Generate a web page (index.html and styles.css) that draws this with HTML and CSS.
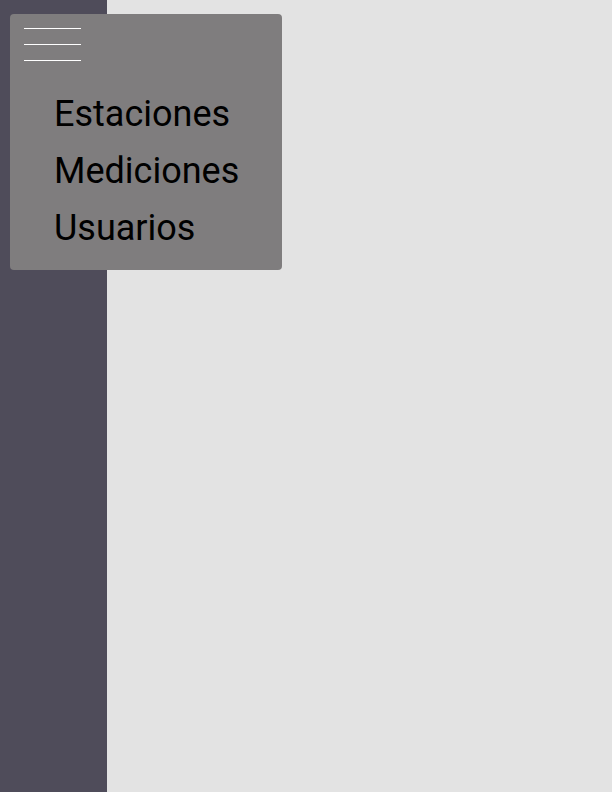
FILE: index.html
```html
<!DOCTYPE html>
<html>
<head>
<meta charset="utf-8">
<link rel="stylesheet" href="styles.css">
</head>
<body>
<div class="layout">
  <aside class="sidebar"></aside>
  <main class="content"></main>
</div>
<nav class="menu">
  <div class="burger">
    <span></span><span></span><span></span>
  </div>
  <ul class="links">
    <li>Estaciones</li>
    <li>Mediciones</li>
    <li>Usuarios</li>
  </ul>
</nav>
</body>
</html>
```
FILE: styles.css
```css
html, body {
  margin: 0;
  padding: 0;
  height: 100%;
}
body {
  font-family: Roboto, "Liberation Sans", sans-serif;
  position: relative;
}
.layout {
  display: flex;
  height: 100%;
}
.sidebar {
  width: 107px;
  background: #4f4c5a;
}
.content {
  flex: 1;
  background: #e3e3e3;
}
.menu {
  position: absolute;
  left: 10px;
  top: 14px;
  width: 272px;
  height: 256px;
  box-sizing: border-box;
  background: #7f7d7e;
  border-radius: 4px;
  padding: 14px 0 0 14px;
}
.burger {
  display: flex;
  flex-direction: column;
  gap: 15px;
  width: 57px;
}
.burger span {
  display: block;
  height: 1px;
  background: #ffffff;
}
.links {
  list-style: none;
  margin: 0;
  padding: 0 0 0 30px;
  margin-top: 25px;
  font-size: 36px;
  line-height: 57px;
  color: #000;
}
```
